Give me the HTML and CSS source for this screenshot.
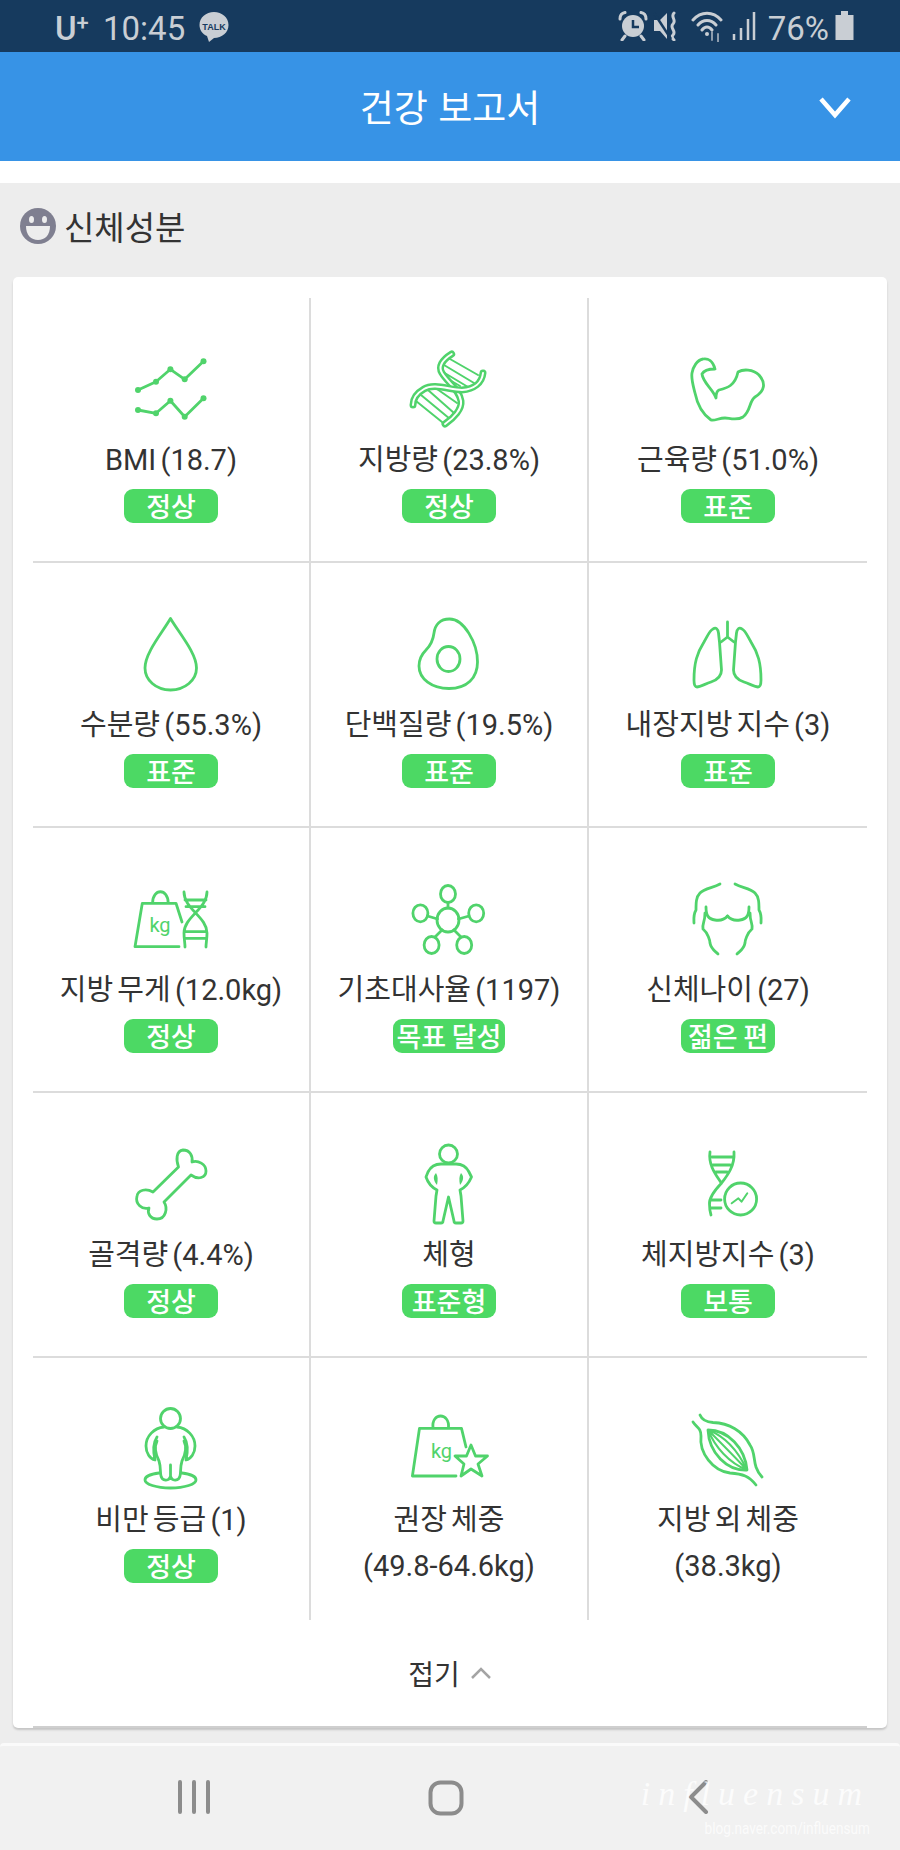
FILE: index.html
```html
<!DOCTYPE html>
<html lang="ko">
<head>
<meta charset="utf-8">
<title>건강 보고서</title>
<link rel="stylesheet" href="styles.css">
</head>
<body>
<div class="page">
  <div class="status">
    <div class="status-left">
      <span class="carrier">U<sup>+</sup></span>
      <span class="clock">10:45</span>
      <svg class="talk" width="32" height="32" viewBox="0 0 32 32"><path class="solid" d="M16 1C8 1 1.500 6.500 1.500 14C1.500 19 4.500 23 9 25L11 31L16 27C24 27 30.500 21.500 30.500 14C30.500 6.500 24 1 16 1Z"/><text class="talk-text" x="16" y="18.500" text-anchor="middle">TALK</text></svg>
    </div>
    <div class="status-right">
      <svg class="s-alarm" width="30" height="30" viewBox="0 0 30 30"><circle class="solid" cx="15" cy="15" r="11"/><path class="st-cut" d="M15 9V16H21"/><path class="st" d="M2 8C2 4 4 2 7 1.500M28 8C28 4 26 2 23 1.500M7 25L4 29M23 25L26 29"/></svg>
      <svg class="s-mute" width="27" height="30" viewBox="0 0 27 30"><path class="solid" d="M1 9H7L14 2V28L7 20H1Z"/><path class="st-bold" d="M21 2C17 6 24 9 20 13C16 17 24 20 20 24C18 26 20 28 21 29"/><path class="st-cut" d="M1 2L18 28"/></svg>
      <svg class="s-wifi" width="33" height="32" viewBox="0 0 33 32"><path class="st" d="M2 10C10 1 22 1 30 10M7 15C12 9 20 9 25 15M11 20C14 16 18 16 21 20"/><circle class="solid" cx="16" cy="24" r="2"/><path class="st-dim" d="M21 22V30M27 24V32"/></svg>
      <svg class="s-bars" width="24" height="30" viewBox="0 0 24 30"><path class="bars" d="M2 23V29M9 17V29M16 8V29M22 1V29"/></svg>
      <span class="pct">76%</span>
      <svg class="s-batt" width="19" height="30" viewBox="0 0 19 30"><path class="solid" d="M6 0H13V4H18.500V29H0.500V4H6Z"/></svg>
    </div>
  </div>

  <header class="appbar">
    <h1 class="appbar-title">건강 보고서</h1>
    <svg class="appbar-chevron" width="34" height="24" viewBox="0 0 34 24"><path d="M3 3L17 19L31 3"/></svg>
  </header>
  <div class="band"></div>

  <main class="content">
    <div class="section-head">
      <svg width="36" height="36" viewBox="0 0 36 36"><circle class="smile" cx="18" cy="18" r="18"/><ellipse class="smile-eye" cx="11.500" cy="11.500" rx="2.500" ry="3.500"/><ellipse class="smile-eye" cx="24.500" cy="11.500" rx="2.500" ry="3.500"/><path class="smile-eye" d="M6 18H30C30 27 25 32 18 32C11 32 6 27 6 18Z"/></svg>
      <h2 class="section-title">신체성분</h2>
    </div>

    <section class="card">
      <div class="grid">

        <div class="cell">
          <svg class="ic" viewBox="0 0 90 90"><path d="M12 47L30 38.700L44.400 26.300L58.700 36.300L77.500 18.300M12 67L30 70.300L44.400 57.700L58.700 73.700L77.500 55.300"/><g class="dot"><circle cx="12" cy="47" r="3"/><circle cx="30" cy="38.700" r="3"/><circle cx="44.400" cy="26.300" r="3"/><circle cx="58.700" cy="36.300" r="3"/><circle cx="77.500" cy="18.300" r="3"/><circle cx="12" cy="67" r="3"/><circle cx="30" cy="70.300" r="3"/><circle cx="44.400" cy="57.700" r="3"/><circle cx="58.700" cy="73.700" r="3"/><circle cx="77.500" cy="55.300" r="3"/></g></svg>
          <div class="label">BMI (18.7)</div>
          <div class="line2"><span class="badge">정상</span></div>
        </div>

        <div class="cell">
          <svg class="ic" viewBox="0 0 90 90"><path class="thin" d="M46 16L74 32M40 22L70 40M39 29L64 44M44 36L56 43M24 47L50 70M17 52L46 76M12 58L38 79M33 46L53 60"/><path class="band-g" d="M47.700 11C38 17 34 24 38 30C44 40 55 46 57 58C58 66 50 75 41 81"/><path class="band-w" d="M47.700 11C38 17 34 24 38 30C44 40 55 46 57 58C58 66 50 75 41 81"/><path class="band-g" d="M79 30C78 40 70 46 58 47C46 47 30 40 20 46C13 50 9 56 9 62"/><path class="band-w" d="M79 30C78 40 70 46 58 47C46 47 30 40 20 46C13 50 9 56 9 62"/></svg>
          <div class="label">지방량 (23.8%)</div>
          <div class="line2"><span class="badge">정상</span></div>
        </div>

        <div class="cell">
          <svg class="ic" viewBox="0 0 90 90"><path d="M20 16C25 15 30 18 32 26C27 26 21 27 19 31C20 40 30 46 33 55C33 50 34 48 36 47C44 45 52 43 55 29C60 26 70 26 76 32C83 40 82 48 72 54C66 58 68 68 60 74C54 78 46 75 42 75C36 75 32 78 28 77C18 70 14 60 12 50C10 42 8 36 9 30C10 24 14 17 20 16Z"/></svg>
          <div class="label">근육량 (51.0%)</div>
          <div class="line2"><span class="badge">표준</span></div>
        </div>

        <div class="cell">
          <svg class="ic" viewBox="0 0 90 90"><path d="M44.500 10.500C36 25 19 45 19 60C19 72 30 82 44.500 82C59 82 70.500 72 70.500 60C70.500 45 53 25 44.500 10.500Z"/></svg>
          <div class="label">수분량 (55.3%)</div>
          <div class="line2"><span class="badge">표준</span></div>
        </div>

        <div class="cell">
          <svg class="ic" viewBox="0 0 90 90"><path d="M45.500 11C36 11 31 17 30 25C29 33 26 38 22 42C17 47 15 52 15 58C15 71 28 80.500 45 80.500C63 80.500 73.500 70 73.500 54C73.500 35 60 11 45.500 11Z"/><ellipse cx="44.500" cy="51" rx="11.500" ry="12.500"/></svg>
          <div class="label">단백질량 (19.5%)</div>
          <div class="line2"><span class="badge">표준</span></div>
        </div>

        <div class="cell">
          <svg class="ic" viewBox="0 0 90 90"><path d="M30 21C33 19 35 21 35.500 25L36.500 34L38.500 62C38.500 68 34 72 28 74C22 76 17 79 14 79C12 79 11 76 11 72C11 55 14 45 21 34C25 27 27 22 30 21Z"/><path d="M59 21C56 19 54 21 53.500 25L52.500 34L50.500 62C50.500 68 55 72 61 74C67 76 72 79 75 79C77 79 78 76 78 72C78 55 75 45 68 34C64 27 62 22 59 21Z"/><path d="M44.500 14V29L38 34M44.500 29L51 34"/></svg>
          <div class="label">내장지방 지수 (3)</div>
          <div class="line2"><span class="badge">표준</span></div>
        </div>

        <div class="cell">
          <svg class="ic" viewBox="0 0 90 90"><path d="M53 73.700H9L16.300 30.300H50L56 49M26.600 30C26.600 15 42.200 15 42.200 30"/><text class="ic-text" x="34" y="59" text-anchor="middle">kg</text><path d="M58 19C58 36 81 44 81 60C81 66 80 70 80 74M81 19C81 36 58 44 58 60C58 66 59 70 59 74M59 27H80M60 33.700H79M60 58.700H80M60 65.300H80"/></svg>
          <div class="label">지방 무게 (12.0kg)</div>
          <div class="line2"><span class="badge">정상</span></div>
        </div>

        <div class="cell">
          <svg class="ic" viewBox="0 0 90 90"><ellipse cx="44" cy="47" rx="11" ry="12"/><ellipse cx="44" cy="21" rx="7.500" ry="8.500"/><ellipse cx="16.400" cy="40.300" rx="7.500" ry="8.500"/><ellipse cx="72.200" cy="40.300" rx="7.500" ry="8.500"/><ellipse cx="27.600" cy="72" rx="7.500" ry="8.500"/><ellipse cx="60.200" cy="72" rx="7.500" ry="8.500"/><path d="M44 29.500V35M23.500 43L33.500 46M65 43L54.500 46M31 64L38 57M57 64L50 57"/></svg>
          <div class="label">기초대사율 (1197)</div>
          <div class="line2"><span class="badge badge-wide">목표 달성</span></div>
        </div>

        <div class="cell">
          <svg class="ic" viewBox="0 0 90 90"><path d="M37 11C30 15 22 15 17 20C13 24 13 30 13 37C10 42 11 48 11 50M23 34C23 42 25 46 32 47C38 48 42 46 44.500 43M22 40C22 50 19 50 20 56C25 60 27 68 27 70C28 76 32 78 35 81"/><path d="M52 11C59 15 67 15 72 20C76 24 76 30 76 37C79 42 78 48 78 50M66 34C66 42 64 46 57 47C51 48 47 46 44.500 43M67 40C67 50 70 50 69 56C64 60 62 68 62 70C61 76 57 78 54 81"/></svg>
          <div class="label">신체나이 (27)</div>
          <div class="line2"><span class="badge">젊은 편</span></div>
        </div>

        <div class="cell">
          <svg class="ic" viewBox="0 0 90 90"><path d="M52.500 29C50 22 50 13 57 12C64 12 67 18 66 24C72 22 80 26 80 33C80 40 72 42 65 37L38 64C42 70 40 81 31 81C24 81 21 75 23 70C16 72 9 66 11 58C12 52 20 50 27 54Z"/></svg>
          <div class="label">골격량 (4.4%)</div>
          <div class="line2"><span class="badge">정상</span></div>
        </div>

        <div class="cell">
          <svg class="ic" viewBox="0 0 90 90"><ellipse cx="44.500" cy="16" rx="9" ry="9"/><path d="M37 26C30 26 26 30 24 34L22 39C24 45 29 50 33 52L32 58L30 83Q30 85 32 85L37 85Q39 85 39 83L44.500 59L50 83Q50 85 52 85L57 85Q59 85 59 83L57 58L56 52C60 50 65 45 67.500 39L65 34C63 30 59 26 52 26Z"/><path class="fillg" d="M32 35C29 38 29 42 33 47C34 42 34 38 32 35ZM57 35C60 38 60 42 56 47C55 42 55 38 57 35Z"/></svg>
          <div class="label">체형</div>
          <div class="line2"><span class="badge">표준형</span></div>
        </div>

        <div class="cell">
          <svg class="ic" viewBox="0 0 90 90"><path d="M27 14C25 28 34 38 38.400 45.300C44 38 52 28 51 14M38.400 45.300C32 52 26 60 26.500 66C26.500 70 27 74 28 77M29 19H49M30 27H47M33 34H44M28 62H38M28 70H38"/><circle cx="57.600" cy="61" r="16"/><path class="thin" d="M48.700 65.300L55.400 60.300L58.500 63.700L64.300 55.300"/></svg>
          <div class="label">체지방지수 (3)</div>
          <div class="line2"><span class="badge">보통</span></div>
        </div>

        <div class="cell">
          <svg class="ic" viewBox="0 0 90 90"><circle cx="44.500" cy="15.500" r="10"/><path d="M38 24C28 25 20 33 20 43C20 50 24 56 29 57C27 48 27 40 31 34M51 24C61 25 69 33 69 43C69 50 65 56 60 57C62 48 62 40 58 34M31 38C28 44 30 52 33 58C35 64 34 70 35 73C36 78 43 79 44.500 73V62M58 38C61 44 59 52 56 58C54 64 55 70 54 73C53 78 46 79 44.500 73M33 70C24 71 19 74 19 77C19 81 30 85 44.500 85C59 85 70 81 70 77C70 74 65 71 56 70"/></svg>
          <div class="label">비만 등급 (1)</div>
          <div class="line2"><span class="badge">정상</span></div>
        </div>

        <div class="cell">
          <svg class="ic" viewBox="0 0 90 90"><path d="M52 73H8.400L15.500 25.300H57.500L62 44M29 25C27 9 46 9 44.500 25M67 42L71.500 53L83.500 53L74 61L78 73L67 66L57 73L60 61L51 53L62.500 53Z"/><text class="ic-text" x="37.500" y="55" text-anchor="middle">kg</text></svg>
          <div class="label">권장 체중</div>
          <div class="line2">(49.8-64.6kg)</div>
        </div>

        <div class="cell">
          <svg class="ic" viewBox="0 0 90 90"><path d="M17 12C19 17 23 19 30 19.500C46 20 60 28 67 42C74 52 68 62 79 74M10 19C14 25 18 25 18 33C16 50 30 68 47 70C60 71 66 73 73 82M25 27C45 27 62 45 64 67C44 68 26 50 25 27Z"/><path class="thin" d="M25 27C38 40 50 52 64 67M25 27C32 44 46 60 64 67M25 27C44 34 56 50 64 67"/></svg>
          <div class="label">지방 외 체중</div>
          <div class="line2">(38.3kg)</div>
        </div>

      </div>
      <div class="collapse">
        <span class="collapse-text">접기</span>
        <svg width="22" height="14" viewBox="0 0 22 14"><path d="M2 12L11 3L20 12"/></svg>
      </div>
    </section>
  </main>

  <nav class="navbar">
    <svg width="34" height="34" viewBox="0 0 34 34"><path d="M3 2V32M17 2V32M31 2V32"/></svg>
    <svg width="36" height="36" viewBox="0 0 36 36"><rect x="2.500" y="2.500" width="31" height="31" rx="10"/></svg>
    <svg width="24" height="34" viewBox="0 0 24 34"><path d="M20 2L5 17L20 32"/></svg>
    <div class="watermark">
      <div class="wm-script">influensum</div>
      <div class="wm-url">blog.naver.com/influensum</div>
    </div>
  </nav>
</div>
</body>
</html>
```

FILE: styles.css
```css
* { box-sizing: border-box; }
html, body { margin: 0; padding: 0; }
body {
  width: 900px;
  height: 1850px;
  overflow: hidden;
  font-family: Roboto, "Noto Sans CJK KR", "Noto Sans", sans-serif;
  background: #ededed;
}
.page { display: flex; flex-direction: column; height: 1850px; }

/* status bar */
.status {
  height: 52px;
  background: #163a5e;
  color: #c9ced4;
  display: flex;
  align-items: center;
  justify-content: space-between;
  padding: 0 46px 0 55px;
  flex: none;
}
.status-left, .status-right { display: flex; align-items: center; }
.carrier { font-size: 33px; font-weight: 500; width: 48px; line-height: 52px; margin-top: 6px; }
.carrier sup { font-size: 22px; line-height: 0; vertical-align: 10px; }
.clock { font-size: 33px; width: 95px; line-height: 52px; margin-top: 6px; }
.talk { margin-top: 2px; }
.talk-text { font: 700 9px "Liberation Sans", sans-serif; fill: #163a5e; }
.solid { fill: #c9ced4; stroke: none; }
.st { fill: none; stroke: #c9ced4; stroke-width: 3; stroke-linecap: round; }
.st-bold { fill: none; stroke: #c9ced4; stroke-width: 3; stroke-linecap: round; }
.st-dim { fill: none; stroke: #8d9cad; stroke-width: 2; stroke-linecap: round; }
.st-cut { fill: none; stroke: #163a5e; stroke-width: 2.500; }
.bars { fill: none; stroke: #c9ced4; stroke-width: 2.500; }
.pct { font-size: 33px; line-height: 52px; margin: 6px 6px 0 12px; }
.s-mute { margin-left: 5px; }
.s-wifi { margin-left: 11px; }
.s-bars { margin-left: 8px; }

/* app bar */
.appbar {
  height: 109px;
  background: #3793e6;
  display: flex;
  align-items: center;
  justify-content: center;
  position: relative;
  flex: none;
  padding-bottom: 2px;
}
.appbar-title {
  margin: 0;
  font: 400 37px "Noto Sans CJK KR", sans-serif;
  color: #fff;
}
.appbar-chevron { position: absolute; left: 818px; top: 44px; }
.appbar-chevron path { fill: none; stroke: #fff; stroke-width: 4.500; }
.band { height: 22px; background: #fff; flex: none; }

/* content */
.content { flex: none; height: 1560px; padding: 0 13px; background: #ededed; }
.section-head { height: 94px; display: flex; align-items: center; gap: 8px; padding: 0 0 8px 7px; }
.smile { fill: #7f7f90; }
.smile-eye { fill: #ededed; }
.section-title { margin: 0; font: 400 33px "Noto Sans CJK KR", sans-serif; color: #333; }

.card {
  height: 1451px;
  background: #fff;
  border-radius: 5px;
  box-shadow: 0 2px 2px #c6c6c6;
  padding: 21px 20px 0;
}
.grid { display: grid; grid-template-columns: repeat(3, 278px); grid-template-rows: repeat(4, 265px) 262px; }
.cell {
  display: flex;
  flex-direction: column;
  align-items: center;
  padding-top: 45px;
  border-right: 2px solid #dcdcdc;
  border-bottom: 2px solid #dcdcdc;
  color: #333;
}
.cell:nth-child(3n) { border-right: 0; }
.cell:nth-last-child(-n+3) { border-bottom: 0; }

.ic { width: 90px; height: 90px; fill: none; stroke: #50d36b; stroke-width: 2.800; stroke-linecap: round; stroke-linejoin: round; flex: none; }
.ic .dot { fill: #50d36b; stroke: none; }
.ic .thin { stroke-width: 2; }
.ic .fillg { fill: #50d36b; stroke: none; }
.ic .band-g { stroke-width: 7; }
.ic .band-w { stroke: #fff; stroke-width: 2; }
.ic-text { font: 400 20px Roboto, sans-serif; fill: #50d36b; stroke: none; }

.label { margin-top: 4px; height: 46px; line-height: 46px; font-size: 29px; word-spacing: -3px; white-space: nowrap; }
.line2 { height: 46px; line-height: 46px; font-size: 29px; display: flex; align-items: center; white-space: nowrap; }
.badge {
  min-width: 94px;
  height: 34px;
  padding: 0 4px;
  border-radius: 9px;
  background: #4cd964;
  color: #fff;
  font: 500 27px/33px "Noto Sans CJK KR", sans-serif;
  word-spacing: -2px;
  text-align: center;
}

.collapse {
  height: 108px;
  border-bottom: 2px solid #cfcfcf;
  display: flex;
  align-items: center;
  justify-content: center;
  gap: 10px;
}
.collapse-text { font: 400 28px "Noto Sans CJK KR", sans-serif; color: #333; }
.collapse path { fill: none; stroke: #a4a4a4; stroke-width: 2.500; }

/* nav */
.navbar {
  flex: none;
  height: 107px;
  background: #f1f1f1;
  border-top: 3px solid #fafafa;
  border-radius: 4px 4px 0 0;
  position: relative;
}
.navbar svg { position: absolute; top: 34px; }
.navbar svg:nth-child(1) { left: 177px; }
.navbar svg:nth-child(2) { left: 428px; }
.navbar svg:nth-child(3) { left: 686px; }
.navbar path, .navbar rect { fill: none; stroke: #8c8c8c; stroke-width: 4; stroke-linecap: round; }
.watermark { position: absolute; left: 630px; top: 26px; width: 240px; color: #fff; text-align: right; }
.wm-script { font: italic 400 34px/44px "Liberation Serif", serif; letter-spacing: 8px; white-space: nowrap; opacity: .8; }
.wm-url { font: 400 17px/24px Roboto, sans-serif; transform: scaleX(.8); transform-origin: right center; white-space: nowrap; opacity: .75; }
```
